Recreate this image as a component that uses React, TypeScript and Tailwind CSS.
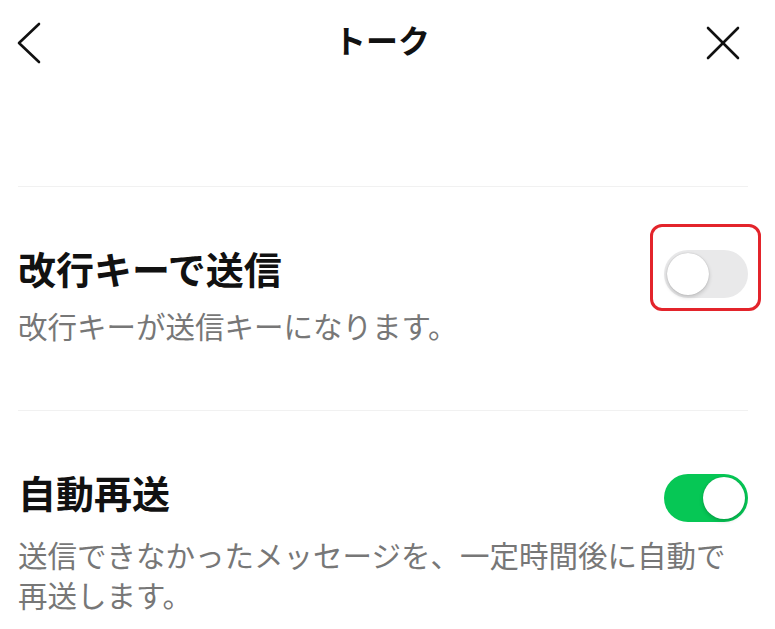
import React from 'react';

interface ToggleProps {
  on: boolean;
  highlighted?: boolean;
}

const Toggle: React.FC<ToggleProps> = ({ on, highlighted }) => {
  return (
    <div className="relative shrink-0 mt-[4px] mb-[-8px]">
      {/* Red annotation box around the toggle */}
      {highlighted && (
        <div className="absolute left-[-14px] right-[-13px] top-[-26px] bottom-[-13px] rounded-[12px] border-[3px] border-[#e3242b]" />
      )}
      <div
        className={
          on
            ? 'w-[84px] h-[48px] rounded-full bg-[#06c755] flex items-center justify-end p-[3px]'
            : 'w-[84px] h-[48px] rounded-full bg-[#e9e9ea] flex items-center justify-start p-[3px]'
        }
      >
        <div className="w-[42px] h-[42px] rounded-full bg-white shadow-[0_2px_4px_rgba(0,0,0,0.18),0_0_1px_rgba(0,0,0,0.25)]" />
      </div>
    </div>
  );
};

interface SettingRowProps {
  title: string;
  description: React.ReactNode;
  on: boolean;
  highlighted?: boolean;
  gap: string;
}

const SettingRow: React.FC<SettingRowProps> = ({ title, description, on, highlighted, gap }) => {
  return (
    <div className="ml-[18px] mr-[27px] border-t border-[#f1f1f1] pt-[59px]">
      <div className="flex items-start justify-between">
        <div className="text-[38px] leading-[44px] font-bold text-[#111111]">{title}</div>
        <Toggle on={on} highlighted={highlighted} />
      </div>
      <div className={`${gap} text-[29.5px] leading-[40px] text-[#777777]`}>{description}</div>
    </div>
  );
};

export default function App() {
  return (
    <div className="w-[775px] h-[629px] bg-white overflow-hidden font-['Noto_Sans_CJK_JP','Noto_Sans',sans-serif]">
      {/* Header */}
      <div className="h-[86px] flex items-center pl-[16px] pr-[35px]">
        <div className="flex-1 flex">
          <svg width="26" height="42" viewBox="0 0 26 42" fill="none">
            <polyline points="23,2 3,21 23,40" stroke="#111" strokeWidth="2.6" strokeLinecap="round" strokeLinejoin="round" />
          </svg>
        </div>
        <div className="text-[32px] leading-[40px] font-bold text-[#111111] ml-[8px] mb-[8px]">トーク</div>
        <div className="flex-1 flex justify-end">
          <svg width="34" height="34" viewBox="0 0 34 34" fill="none">
            <line x1="2" y1="2" x2="32" y2="32" stroke="#111" strokeWidth="2.6" strokeLinecap="round" />
            <line x1="32" y1="2" x2="2" y2="32" stroke="#111" strokeWidth="2.6" strokeLinecap="round" />
          </svg>
        </div>
      </div>

      <div className="h-[100px]" />

      <div className="pb-[65px]">
        <SettingRow
          title="改行キーで送信"
          description="改行キーが送信キーになります。"
          on={false}
          highlighted
          gap="mt-[15px]"
        />
      </div>

      <SettingRow
        title="自動再送"
        description={
          <>
            送信できなかったメッセージを、一定時間後に自動で
            <br />
            再送します。
          </>
        }
        on
        gap="mt-[20px]"
      />
    </div>
  );
}
